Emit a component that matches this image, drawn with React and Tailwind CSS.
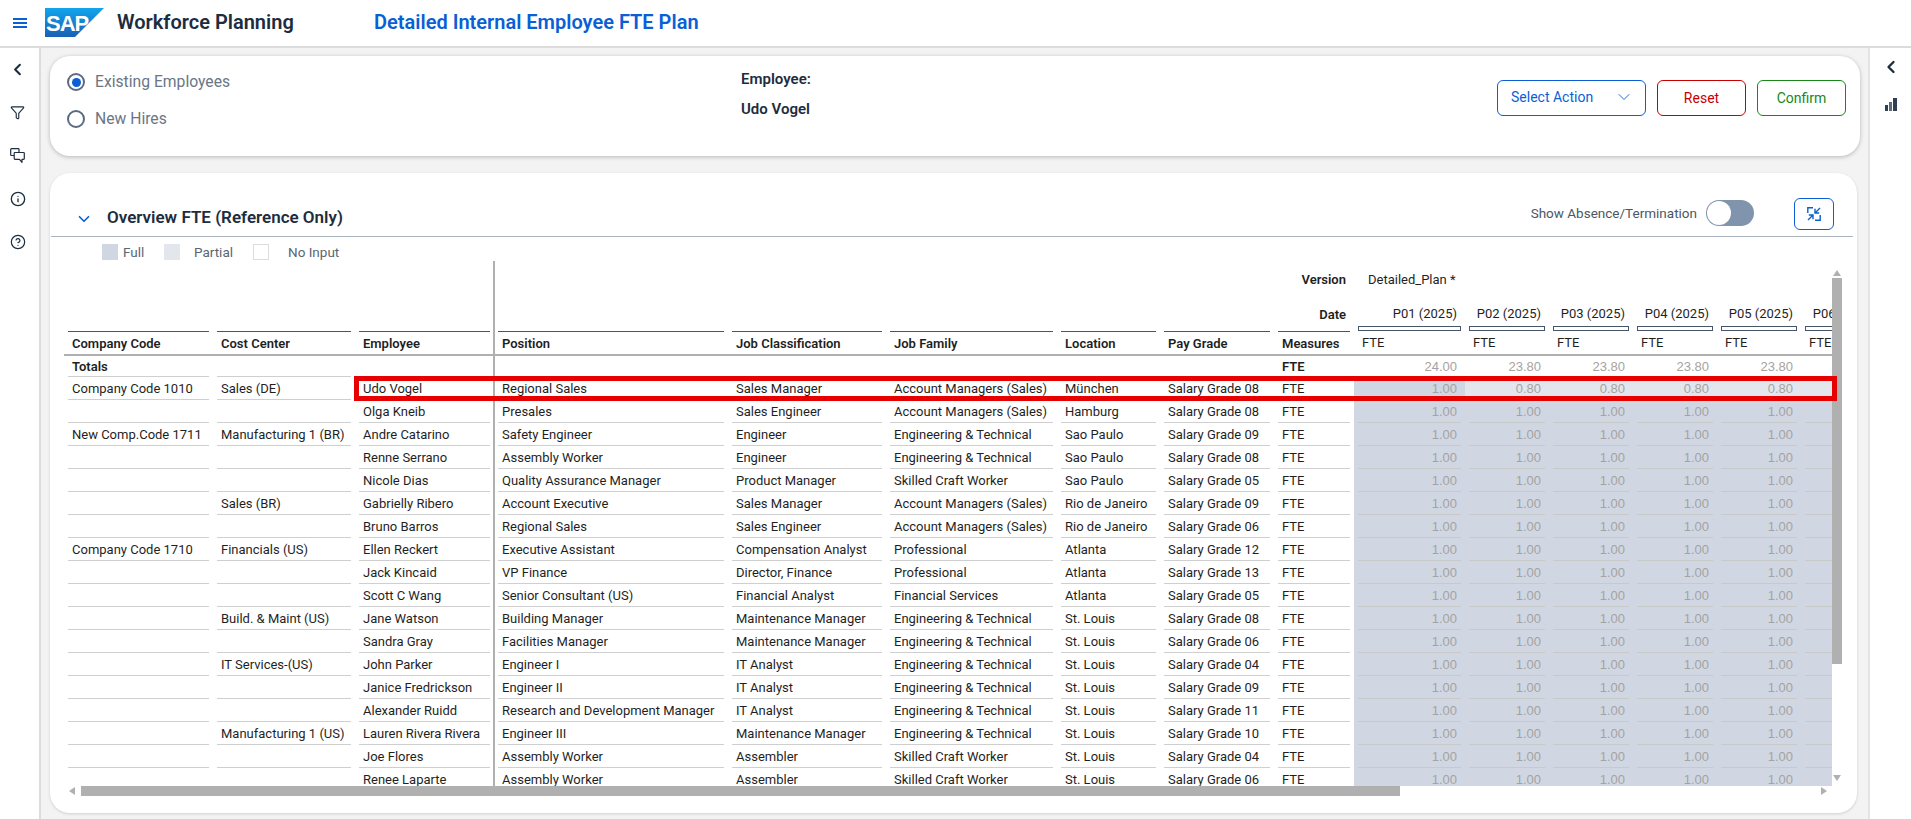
import React from 'react';
import { ChevronLeft, ChevronDown, Filter, Info, CircleHelp } from 'lucide-react';

const rows = [
  ['Company Code 1010', 'Sales (DE)', 'Udo Vogel', 'Regional Sales', 'Sales Manager', 'Account Managers (Sales)', 'München', 'Salary Grade 08'],
  ['', '', 'Olga Kneib', 'Presales', 'Sales Engineer', 'Account Managers (Sales)', 'Hamburg', 'Salary Grade 08'],
  ['New Comp.Code 1711', 'Manufacturing 1 (BR)', 'Andre Catarino', 'Safety Engineer', 'Engineer', 'Engineering & Technical', 'Sao Paulo', 'Salary Grade 09'],
  ['', '', 'Renne Serrano', 'Assembly Worker', 'Engineer', 'Engineering & Technical', 'Sao Paulo', 'Salary Grade 08'],
  ['', '', 'Nicole Dias', 'Quality Assurance Manager', 'Product Manager', 'Skilled Craft Worker', 'Sao Paulo', 'Salary Grade 05'],
  ['', 'Sales (BR)', 'Gabrielly Ribero', 'Account Executive', 'Sales Manager', 'Account Managers (Sales)', 'Rio de Janeiro', 'Salary Grade 09'],
  ['', '', 'Bruno Barros', 'Regional Sales', 'Sales Engineer', 'Account Managers (Sales)', 'Rio de Janeiro', 'Salary Grade 06'],
  ['Company Code 1710', 'Financials (US)', 'Ellen Reckert', 'Executive Assistant', 'Compensation Analyst', 'Professional', 'Atlanta', 'Salary Grade 12'],
  ['', '', 'Jack Kincaid', 'VP Finance', 'Director, Finance', 'Professional', 'Atlanta', 'Salary Grade 13'],
  ['', '', 'Scott C Wang', 'Senior Consultant (US)', 'Financial Analyst', 'Financial Services', 'Atlanta', 'Salary Grade 05'],
  ['', 'Build. & Maint (US)', 'Jane Watson', 'Building Manager', 'Maintenance Manager', 'Engineering & Technical', 'St. Louis', 'Salary Grade 08'],
  ['', '', 'Sandra Gray', 'Facilities Manager', 'Maintenance Manager', 'Engineering & Technical', 'St. Louis', 'Salary Grade 06'],
  ['', 'IT Services-(US)', 'John Parker', 'Engineer I', 'IT Analyst', 'Engineering & Technical', 'St. Louis', 'Salary Grade 04'],
  ['', '', 'Janice Fredrickson', 'Engineer II', 'IT Analyst', 'Engineering & Technical', 'St. Louis', 'Salary Grade 09'],
  ['', '', 'Alexander Ruidd', 'Research and Development Manager', 'IT Analyst', 'Engineering & Technical', 'St. Louis', 'Salary Grade 11'],
  ['', 'Manufacturing 1 (US)', 'Lauren Rivera Rivera', 'Engineer III', 'Maintenance Manager', 'Engineering & Technical', 'St. Louis', 'Salary Grade 10'],
  ['', '', 'Joe Flores', 'Assembly Worker', 'Assembler', 'Skilled Craft Worker', 'St. Louis', 'Salary Grade 04'],
  ['', '', 'Renee Laparte', 'Assembly Worker', 'Assembler', 'Skilled Craft Worker', 'St. Louis', 'Salary Grade 06'],
];

const periods = ['P01 (2025)', 'P02 (2025)', 'P03 (2025)', 'P04 (2025)', 'P05 (2025)', 'P06 (2025)'];
const totals = ['24.00', '23.80', '23.80', '23.80', '23.80', '23.80'];

// frozen columns, then the scrolling attribute columns, then the period columns
const frozenCols = 'grid grid-cols-[141px_134px_131px] gap-x-2 pl-1 w-[431px] shrink-0 border-r-2 border-[#b0b0b0] box-border';
const attrCols = 'grid grid-cols-[226px_150px_163px_95px_106px_72px] gap-x-2 pl-[3px] w-[859px] shrink-0';
const periodCell = (i) => (i === 0 ? 'w-[111px] shrink-0 px-1' : 'w-[84px] shrink-0 px-1');

const Cell = ({ children }) => (
  <div className="h-[23px] flex items-center pl-1 pt-[2px] leading-[16px] border-b border-[#cfcfcf] whitespace-nowrap">{children}</div>
);

const Head = ({ children }) => (
  <div className="h-[23px] flex items-center pl-1 pt-px border-t border-[#475569] font-semibold whitespace-nowrap">{children}</div>
);

const DataRow = ({ row, index }) => (
  <div className="flex h-[23px]">
    <div className={frozenCols}>
      {row.slice(0, 3).map((t, i) => <Cell key={i}>{t}</Cell>)}
    </div>
    <div className={attrCols}>
      {row.slice(3).map((t, i) => <Cell key={i}>{t}</Cell>)}
      <Cell>FTE</Cell>
    </div>
    <div className="flex">
      {periods.map((p, i) => (
        <div key={p} className={`${periodCell(i)} ${index === 0 && i > 0 ? 'bg-[#e3e7ed]' : 'bg-[#d1d7e2]'}`}>
          <div className="h-[23px] flex items-center justify-end pr-1 pt-[2px] leading-[16px] border-b border-[#c8c9c9] font-['Liberation_Sans',sans-serif] text-[13px] text-[#a3a3a3]">
            {index === 0 && i > 0 ? '0.80' : '1.00'}
          </div>
        </div>
      ))}
    </div>
  </div>
);

const SapLogo = () => (
  <svg width="59" height="29" viewBox="0 0 59 29" className="shrink-0 mb-[1px]">
    <defs>
      <linearGradient id="sapBlue" x1="0" y1="0" x2="0" y2="1">
        <stop offset="0" stopColor="#12a5ec" />
        <stop offset="1" stopColor="#1a5fb4" />
      </linearGradient>
    </defs>
    <polygon points="0,0 59,0 30,29 0,29" fill="url(#sapBlue)" />
    <text x="1" y="23" fill="#fff" fontFamily="Liberation Sans, sans-serif" fontWeight="700" fontSize="22" letterSpacing="-1">SAP</text>
  </svg>
);

const ChatIcon = () => (
  <svg width="15" height="15" viewBox="0 0 15 15" fill="none" stroke="#1d2d3e" strokeWidth="1.2" strokeLinejoin="round">
    <path d="M9 4V1.5a.8.8 0 0 0-.8-.8H1.5a.8.8 0 0 0-.8.8v5.2a.8.8 0 0 0 .8.8H4" />
    <path d="M5 4.5h8.5a.8.8 0 0 1 .8.8v5.2a.8.8 0 0 1-.8.8H12v3l-2.5-3H5a.8.8 0 0 1-.8-.8V5.3a.8.8 0 0 1 .8-.8z" />
  </svg>
);

const BarsIcon = () => (
  <svg width="12" height="13" viewBox="0 0 12 13" fill="#2f3e50">
    <rect x="0" y="7" width="3" height="6" />
    <rect x="4" y="4" width="3" height="9" fill="#5c6b7c" />
    <rect x="8" y="0" width="4" height="13" />
  </svg>
);

const ShrinkIcon = () => (
  <svg width="14" height="14" viewBox="0 0 14 14" fill="none" stroke="#0a5fd6" strokeWidth="1.4">
    <path d="M6 .8H.8V6M13.2 8v5.2H8" />
    <path d="M13 1L8.5 5.5M8 1.8V6h4.2M1 13l4.5-4.5M1.8 8H6v4.2" />
  </svg>
);

const Triangle = ({ points }) => (
  <svg width="8" height="8" viewBox="0 0 8 8" fill="#b0b0b0"><polygon points={points} /></svg>
);

const RailSlot = ({ children }) => <div className="h-[43px] flex items-center justify-center">{children}</div>;

export default function App() {
  return (
    <div className="w-[1911px] h-[819px] overflow-hidden bg-white flex flex-col font-['Roboto',sans-serif] text-[13px] text-[#1f1f1f]">
      <header className="h-[48px] shrink-0 flex items-center border-b-2 border-[#dcdcdc] box-border">
        <div className="w-[45px] flex flex-col items-center">
          <div className="w-[14px] flex flex-col gap-[2px] ml-[-5px]">
            <span className="h-[2px] bg-[#0a5fd6]" />
            <span className="h-[2px] bg-[#0a5fd6]" />
            <span className="h-[2px] bg-[#0a5fd6]" />
          </div>
        </div>
        <SapLogo />
        <span className="ml-[13px] w-[257px] mb-[2px] text-[20px] font-semibold text-[#1d2d3e]">Workforce Planning</span>
        <span className="text-[20px] mb-[2px] font-semibold text-[#0a5fd6]">Detailed Internal Employee FTE Plan</span>
      </header>

      <div className="flex flex-1 min-h-0">
        <aside className="w-[41px] shrink-0 border-r-2 border-[#dcdcdc] pr-[4px] text-[#1d2d3e] box-border">
          <RailSlot><ChevronLeft size={19} strokeWidth={2.6} /></RailSlot>
          <RailSlot><Filter size={15} strokeWidth={1.8} /></RailSlot>
          <RailSlot><ChatIcon /></RailSlot>
          <RailSlot><Info size={16} strokeWidth={2} /></RailSlot>
          <RailSlot><CircleHelp size={16} strokeWidth={1.8} /></RailSlot>
        </aside>

        <main className="flex-1 min-w-0 bg-[#f3f3f3] pl-[9px] pr-2 pt-2 flex flex-col gap-[17px]">
          <section className="h-[100px] shrink-0 bg-white rounded-[20px] shadow-[0_1px_4px_rgba(0,0,0,0.25)] flex">
            <div className="w-[691px] pl-[17px] pt-[17px] flex flex-col gap-[19px] text-[15.7px] text-[#6a7686]">
              <label className="flex items-center gap-[10px] h-[18px]">
                <span className="w-[18px] h-[18px] rounded-full border-2 border-[#5b6b82] flex items-center justify-center">
                  <span className="w-[9px] h-[9px] rounded-full bg-[#0a5fd6]" />
                </span>
                Existing Employees
              </label>
              <label className="flex items-center gap-[10px] h-[18px]">
                <span className="w-[18px] h-[18px] rounded-full border-2 border-[#5b6b82]" />
                New Hires
              </label>
            </div>
            <div className="pt-[14px] flex flex-col gap-[12px] text-[15px] font-semibold text-[#1d2d3e]">
              <span className="h-[18px] leading-[18px]">Employee:</span>
              <span className="h-[18px] leading-[18px]">Udo Vogel</span>
            </div>
            <div className="ml-auto pr-[14px] pt-[24px] flex gap-[11px] text-[14px]">
              <button className="w-[149px] h-[36px] border border-[#0a5fd6] rounded-md text-[#0a5fd6] flex items-center justify-between pl-[13px] pr-[11px] pb-[2px]">
                Select Action
                <ChevronDown size={20} strokeWidth={1.1} />
              </button>
              <button className="w-[89px] h-[36px] border border-[#c80000] rounded-md text-[#c80000]">Reset</button>
              <button className="w-[89px] h-[36px] border border-[#188918] rounded-md text-[#188918]">Confirm</button>
            </div>
          </section>

          <section className="h-[640px] shrink-0 mr-[3px] bg-white rounded-[20px] shadow-[0_1px_3px_rgba(0,0,0,0.15)] flex flex-col">
            <div className="h-[64px] shrink-0 ml-px mr-1 border-b border-[#a9b4be] flex items-end pb-[6px]">
              <ChevronDown size={18} strokeWidth={2.2} className="ml-[24px] mb-[2px] text-[#0a5fd6]" />
              <span className="ml-[14px] text-[17px] font-semibold text-[#1d2d3e] h-[26px] leading-[26px]">Overview FTE (Reference Only)</span>
              <div className="ml-auto flex items-center h-[26px] mb-[4px] text-[13.5px] text-[#4a5766]">
                <span>Show Absence/Termination</span>
                <span className="ml-[9px] w-[48px] h-[26px] rounded-full bg-[#8094ad] flex items-center pl-px">
                  <span className="w-6 h-6 rounded-full bg-white" />
                </span>
              </div>
              <button className="ml-[40px] mr-[19px] w-[40px] h-[32px] border border-[#0a5fd6] rounded-md flex items-center justify-center">
                <ShrinkIcon />
              </button>
            </div>

            <div className="h-[24px] shrink-0 pl-[52px] pt-[7px] flex items-start text-[13.5px] leading-[17px] text-[#5a6673]">
              <span className="w-4 h-4 bg-[#d1d7e2]" />
              <span className="ml-[5px] w-[41px]">Full</span>
              <span className="w-4 h-4 bg-[#e3e7ed]" />
              <span className="ml-[14px] w-[59px]">Partial</span>
              <span className="w-4 h-4 border border-[#dcdcdc]" />
              <span className="ml-[19px]">No Input</span>
            </div>

            <div className="relative ml-[14px] flex h-[525px] shrink-0">
              <div className="w-[1768px] h-[525px] overflow-hidden shrink-0">
                <div className="flex h-[35px]">
                  <div className={frozenCols} />
                  <div className={`${attrCols} items-center pt-[2px]`}>
                    <div className="col-start-6 pr-[4px] text-right font-semibold">Version</div>
                  </div>
                  <span className="ml-[14px] self-center whitespace-nowrap pt-[2px]">Detailed_Plan *</span>
                </div>
                <div className="flex h-[35px]">
                  <div className={frozenCols} />
                  <div className={`${attrCols} items-center pt-[2px]`}>
                    <div className="col-start-6 pr-[4px] text-right font-semibold">Date</div>
                  </div>
                  <div className="flex">
                    {periods.map((p, i) => (
                      <div key={p} className={`${periodCell(i)} h-[35px] flex flex-col justify-end`}>
                        <span className="text-right pr-1 mb-[3px] whitespace-nowrap">{p}</span>
                        <span className="h-[5px] border border-[#475569]" />
                      </div>
                    ))}
                  </div>
                </div>
                <div className="flex h-[25px] border-b-2 border-[#b0b0b0]">
                  <div className={frozenCols}>
                    <Head>Company Code</Head>
                    <Head>Cost Center</Head>
                    <Head>Employee</Head>
                  </div>
                  <div className={attrCols}>
                    <Head>Position</Head>
                    <Head>Job Classification</Head>
                    <Head>Job Family</Head>
                    <Head>Location</Head>
                    <Head>Pay Grade</Head>
                    <Head>Measures</Head>
                  </div>
                  <div className="flex">
                    {periods.map((p, i) => (
                      <div key={p} className={`${periodCell(i)} h-[23px] flex items-center pl-2 pt-px`}>FTE</div>
                    ))}
                  </div>
                </div>
                <div className="flex h-[21px]">
                  <div className={frozenCols}>
                    <div className="h-[21px] flex items-center pl-1 pt-px border-b border-[#cfcfcf] font-semibold">Totals</div>
                    <div className="h-[21px] border-b border-[#cfcfcf]" />
                  </div>
                  <div className={attrCols}>
                    <div className="col-start-6 h-[21px] flex items-center pl-1 pt-px font-semibold">FTE</div>
                  </div>
                  <div className="flex">
                    {totals.map((t, i) => (
                      <div key={i} className={`${periodCell(i)} h-[21px] flex items-center justify-end pr-2 pt-px font-['Liberation_Sans',sans-serif] text-[13px] text-[#a3a3a3]`}>{t}</div>
                    ))}
                  </div>
                </div>
                {rows.map((row, i) => <DataRow key={row[2]} row={row} index={i} />)}
              </div>

              <div className="w-[10px] shrink-0 flex flex-col items-center">
                <div className="h-[17px] flex items-end justify-center pb-[1px]"><Triangle points="4,1 8,7 0,7" /></div>
                <div className="w-[10px] h-[386px] bg-[#b0b0b0] shrink-0" />
                <div className="mt-auto pb-[4px] leading-none"><Triangle points="0,1 8,1 4,7" /></div>
              </div>

              {/* selection box over the current employee row */}
              <div className="absolute left-[290px] top-[115px] w-[1483px] h-[25px] border-[5px] border-[#e60000]" />
            </div>

            <div className="ml-[14px] w-[1768px] h-[10px] shrink-0 flex items-center">
              <div className="w-[17px] flex justify-start pl-[4px]"><Triangle points="1,4 7,0 7,8" /></div>
              <div className="w-[1319px] h-[10px] bg-[#b0b0b0]" />
              <div className="ml-auto pr-[4px] leading-none"><Triangle points="1,0 7,4 1,8" /></div>
            </div>
          </section>
        </main>

        <aside className="w-[43px] shrink-0 border-l-2 border-[#e4e4e4] flex flex-col items-center pt-[9px] gap-[21px] text-[#1d2d3e] box-border">
          <ChevronLeft size={20} strokeWidth={2.8} />
          <BarsIcon />
        </aside>
      </div>
    </div>
  );
}
